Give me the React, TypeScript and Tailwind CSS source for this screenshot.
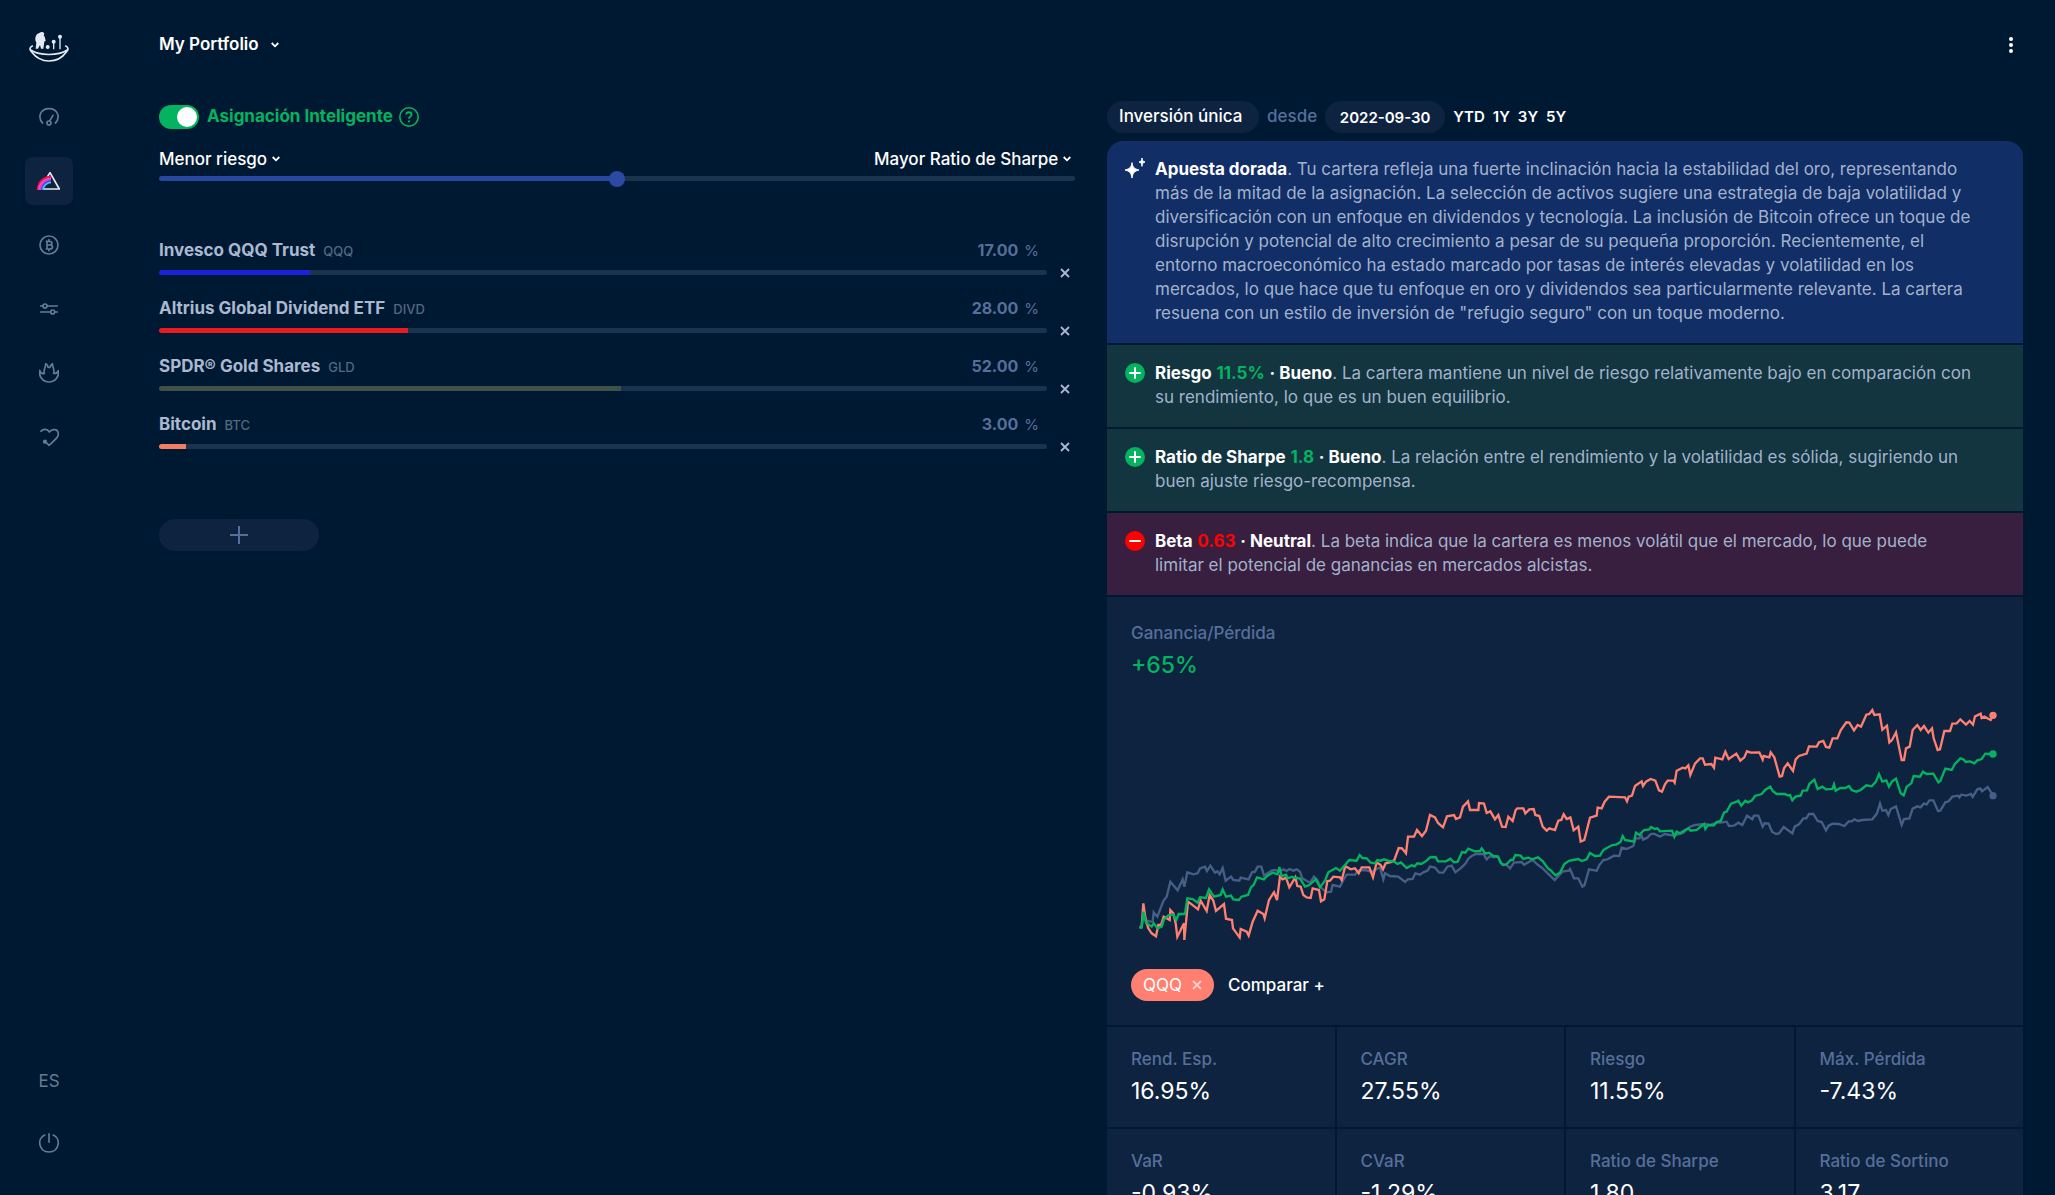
import { useState } from "react"
import type { CSSProperties, ReactNode } from "react"

interface Asset {
    name: string
    ticker: string
    weight: number
    color: string
}

interface Insight {
    kind: "good" | "bad"
    title: string
    value: string
    verdict: string
    text: string
}

const initialAssets: Asset[] = [
    { name: "Invesco QQQ Trust", ticker: "QQQ", weight: 17, color: "#1b22dc" },
    { name: "Altrius Global Dividend ETF", ticker: "DIVD", weight: 28, color: "#e81c1f" },
    { name: "SPDR® Gold Shares", ticker: "GLD", weight: 52, color: "#3f5248" },
    { name: "Bitcoin", ticker: "BTC", weight: 3, color: "#f27f62" },
]

const insights: Insight[] = [
    { kind: "good", title: "Riesgo", value: "11.5%", verdict: "Bueno", text: "La cartera mantiene un nivel de riesgo relativamente bajo en comparación con su rendimiento, lo que es un buen equilibrio." },
    { kind: "good", title: "Ratio de Sharpe", value: "1.8", verdict: "Bueno", text: "La relación entre el rendimiento y la volatilidad es sólida, sugiriendo un buen ajuste riesgo-recompensa." },
    { kind: "bad", title: "Beta", value: "0.63", verdict: "Neutral", text: "La beta indica que la cartera es menos volátil que el mercado, lo que puede limitar el potencial de ganancias en mercados alcistas." },
]

const stats = [
    ["Rend. Esp.", "16.95%"],
    ["CAGR", "27.55%"],
    ["Riesgo", "11.55%"],
    ["Máx. Pérdida", "-7.43%"],
    ["VaR", "-0.93%"],
    ["CVaR", "-1.29%"],
    ["Ratio de Sharpe", "1.80"],
    ["Ratio de Sortino", "3.17"],
]

// Each series is stored in two halves, the second one starts at x = 1380
const series = [
    {
        color: "#465f86",
        first: "88,443 95,440 100,400 110,422 122,425 128,425 131,397 142,410 160,363 170,350 181,305 203,331 218,298 223,320 232,277 250,283 263,280 270,265 285,260 291,273 301,257 315,278 322,274 329,283 338,264 347,302 363,290 370,300 388,302 392,293 416,298 426,277 435,275 443,260 454,260 462,287 475,278 485,272 495,270 508,275 520,268 530,273 538,267 550,272 560,268 570,275 577,295 600,308 612,290 622,300 632,322 650,337 663,335 668,315 690,320 700,300 710,284 735,284 745,272 765,270 785,275 810,262 820,298 825,280 840,288 865,290 885,306 893,298 908,297 916,280 930,284 940,277 953,272 960,260 975,263 988,278 1000,278 1012,260 1025,257 1036,277 1055,262 1067,250 1075,236 1085,228 1098,222 1120,222 1130,238 1140,228 1150,232 1164,230 1176,253 1190,255 1200,265 1212,248 1235,246 1242,254 1268,240 1284,255 1298,265 1334,300 1357,275 1376,272",
        second: "0,537 12,565 25,565 37,590 43,587 57,538 80,542 88,525 100,510 112,508 132,497 148,498 155,473 170,477 190,468 197,445 208,445 215,437 219,449 232,443 242,432 252,431 270,440 284,432 312,437 340,428 360,410 376,405 405,402 420,405 438,398 452,398 470,395 477,408 492,407 505,398 517,405 531,377 547,388 552,377 565,377 578,410 584,400 596,401 606,425 618,432 627,430 641,411 667,430 674,410 688,402 700,385 709,385 717,372 730,372 743,393 755,396 768,421 776,407 788,401 806,402 823,408 836,394 845,394 853,388 865,393 876,390 907,388 921,370 930,340 937,362 948,360 955,375 962,357 978,349 995,405 1002,387 1018,385 1028,356 1042,349 1052,352 1061,341 1070,343 1078,331 1090,331 1104,363 1111,362 1126,337 1136,334 1147,320 1165,317 1168,322 1174,314 1189,317 1203,312 1208,321 1222,298 1231,295 1236,304 1253,291 1269,317",
        end: 317,
    },
    {
        color: "#ff8070",
        first: "90,443 95,440 100,370 107,420 115,445 125,460 138,469 145,435 153,435 161,410 170,415 179,420 181,390 190,400 197,430 202,470 222,430 223,480 234,365 249,376 264,388 272,362 290,393 299,345 310,362 318,393 342,372 348,416 366,420 369,445 389,472 392,447 410,455 416,467 428,425 443,392 460,402 464,415 477,360 492,337 501,360 510,290 518,298 528,293 538,322 556,292 562,318 572,320 580,345 590,352 602,354 608,325 627,330 633,364 643,358 652,303 660,302 670,290 690,292 695,300 706,258 722,268 735,265 746,280 755,262 778,262 789,292 800,247 812,255 819,268 827,250 845,246 853,240 866,204 876,205 888,220 894,170 912,170 921,150 936,168 948,152 960,105 975,112 984,129 999,142 1011,109 1032,105 1038,117 1050,112 1059,80 1074,64 1080,90 1105,90 1107,69 1122,71 1130,99 1141,94 1155,118 1165,105 1176,140 1187,141 1195,110 1208,123 1217,90 1222,85 1240,85 1246,100 1258,88 1271,87 1276,105 1288,108 1298,140 1310,152 1318,145 1335,150 1345,122 1354,120 1361,103 1370,117",
        second: "1,382 11,421 25,410 32,455 43,450 60,383 80,377 83,353 95,355 104,335 117,320 165,322 171,334 176,320 186,317 195,288 215,274 219,288 228,275 242,267 256,272 267,301 276,305 285,283 293,272 310,272 314,278 320,242 338,233 346,235 355,226 361,255 375,221 390,205 398,205 405,224 424,222 432,233 436,203 457,208 466,185 476,207 499,191 511,212 523,202 531,184 542,188 568,187 578,209 581,198 598,202 602,187 613,202 629,260 636,258 642,235 653,220 669,243 677,208 687,198 710,191 717,169 740,170 747,157 760,153 768,171 778,173 788,145 802,145 812,121 829,97 838,98 852,121 863,105 873,110 889,74 898,72 907,60 913,75 929,73 937,119 951,107 958,157 966,150 978,127 995,210 1002,210 1008,175 1019,170 1028,120 1042,105 1052,120 1062,108 1075,128 1086,115 1091,145 1103,180 1110,178 1123,123 1140,123 1147,101 1160,100 1171,88 1188,104 1199,93 1209,104 1215,79 1232,71 1235,84 1243,80 1262,90 1269,76",
        end: 76,
    },
    {
        color: "#04b35f",
        first: "88,443 95,443 100,395 108,428 125,440 131,430 143,445 155,440 162,418 175,406 190,404 199,420 206,402 225,402 232,355 248,357 263,368 270,352 288,354 297,328 312,350 332,345 338,328 348,350 363,347 370,358 387,360 394,350 414,345 423,322 431,315 441,292 462,298 472,287 488,278 503,283 508,261 515,288 528,284 533,295 545,291 560,294 570,296 576,305 585,320 597,316 617,298 630,322 645,302 655,277 678,264 690,272 718,240 740,242 749,225 757,234 770,235 782,248 795,250 802,240 812,242 822,238 837,243 853,245 862,252 873,247 890,264 905,256 914,259 922,250 934,252 950,242 960,232 977,231 984,244 1008,244 1021,236 1032,247 1043,245 1056,216 1066,218 1075,206 1094,214 1110,213 1115,205 1126,221 1137,218 1150,228 1164,230 1172,248 1180,255 1190,252 1202,240 1209,240 1216,225 1232,227 1240,237 1255,233 1267,238 1284,232 1298,243 1314,265 1323,272 1336,286 1350,278 1363,252 1376,243",
        second: "0,512 25,507 35,513 50,508 60,489 75,498 90,497 100,480 125,466 140,463 152,455 158,438 165,450 192,455 198,428 208,435 222,420 238,418 243,411 255,417 262,415 270,424 306,422 313,440 320,425 330,430 345,420 355,415 362,422 380,420 402,402 406,417 414,405 432,406 440,396 452,393 462,368 470,365 483,341 500,335 505,332 514,347 526,332 534,337 545,332 555,318 575,312 585,300 601,290 608,303 620,312 645,312 652,316 660,315 667,331 676,320 692,317 698,302 711,301 718,282 733,269 743,297 757,290 768,298 787,297 792,283 797,302 811,294 826,294 837,288 845,300 859,305 872,300 889,286 905,289 918,275 927,252 937,275 949,271 957,290 966,275 978,266 992,310 1001,316 1010,290 1024,280 1031,258 1050,260 1059,245 1070,252 1090,251 1105,277 1111,273 1126,236 1145,240 1155,222 1171,205 1180,208 1187,216 1200,214 1213,220 1222,211 1235,207 1246,191 1256,192 1269,192",
        end: 192,
    },
]

function shift(points: string, dx: number, dy: number) {
    return points.split(" ").map(p => {
        const [x, y] = p.split(",").map(Number)
        return `${x + dx},${y + dy}`
    }).join(" ")
}

function fill(percent: number, color: string): CSSProperties {
    return { background: `linear-gradient(to right, ${color} ${percent}%, #1a344f ${percent}%)` }
}

function Chevron() {
    return <svg viewBox="0 0 8 6" className="pointer-events-none h-1.5 w-2 shrink-0" fill="none" stroke="currentColor" strokeWidth="1.8"><path d="M0.7 1L4 4.3L7.3 1" /></svg>
}

function Cross() {
    return <svg viewBox="0 0 10 10" className="h-2.5 w-2.5" fill="none" stroke="currentColor" strokeWidth="1.8"><path d="M1 1L9 9M9 1L1 9" /></svg>
}

function Logo() {
    return <svg viewBox="87 93 120 93" className="h-[31px] w-10" fill="none" stroke="#e3eaf3" strokeWidth="5" strokeLinecap="round">
        <path d="M97 138C88 142 88 149 95 156C108 173 127 183 147 183S187 173 199 156C206 149 206 142 197 138" />
        <path d="M92 150C120 168 174 168 202 150" />
        <path d="M161 127V146M180 112V146" strokeWidth="4" />
        <path d="M119 98C124 94 132 96 133 101L131 106C135 110 135 116 137 122L133 125L130 146H123L120 135L114 146H107L109 127C104 122 105 105 113 101Z" fill="#e3eaf3" stroke="none" />
        <g fill="#e3eaf3" stroke="none"><circle cx="143" cy="141" r="6" /><circle cx="161" cy="125" r="6" /><circle cx="180" cy="110" r="6" /></g>
    </svg>
}

function NavIcon({ box, children }: { box: string, children: ReactNode }) {
    return <svg viewBox={box} className="h-5 w-5" fill="none" stroke="currentColor" strokeWidth="5" strokeLinecap="round" strokeLinejoin="round">{children}</svg>
}

function NavItem({ label, active, children }: { label: string, active?: boolean, children: ReactNode }) {
    return <a href="#" aria-label={label} className={`flex h-12 w-12 items-center justify-center rounded-lg ${active ? "bg-[#0e2340]" : ""}`}>{children}</a>
}

function Sidebar() {
    return <aside className="flex w-[98px] shrink-0 flex-col items-center text-[#647d92]">
        <a href="#" aria-label="Inicio" className="mt-[31px]"><Logo /></a>
        <nav className="mt-[31px] flex flex-col gap-4">
            <NavItem label="Panel">
                <NavIcon box="117 321 60 60">
                    <path d="M129 371C111 352 121 326 147 326S183 352 165 371" strokeLinecap="butt" />
                    <circle cx="147" cy="369" r="6" />
                    <path d="M150 361L159 346" />
                </NavIcon>
            </NavItem>
            <NavItem label="Carteras" active>
                <svg viewBox="105 510 84 66" className="h-[22px] w-7" fill="none">
                    <path d="M142 531L150 518L178 567H131" stroke="#e3eaf3" strokeWidth="5" strokeLinejoin="round" />
                    <g strokeWidth="5">
                        <path d="M113 570C113 547 131 530 153 530" stroke="#ff1043" />
                        <path d="M117 570C117 550 134 535 153 535" stroke="#ff4fb0" />
                        <path d="M121 570C121 553 137 539 153 539" stroke="#ee35f5" />
                        <path d="M125 570C125 556 139 543 153 543" stroke="#4c3df0" />
                        <path d="M129 570C129 558 141 547 153 547" stroke="#31d2f5" />
                    </g>
                </svg>
            </NavItem>
            <NavItem label="Cripto">
                <NavIcon box="117 45 60 60">
                    <circle cx="147" cy="75" r="27" />
                    <path d="M139 64H149C158 64 158 75 149 75H141H150C160 75 160 87 150 87H139M141 64V87M147 59V63M147 88V92" strokeWidth="5" />
                </NavIcon>
            </NavItem>
            <NavItem label="Ajustes">
                <NavIcon box="117 237 60 60">
                    <path d="M122 258H128M141 258H172M122 276H152M165 276H172" />
                    <circle cx="135" cy="258" r="6" />
                    <circle cx="158" cy="276" r="6" />
                </NavIcon>
            </NavItem>
            <NavItem label="Tendencias">
                <NavIcon box="117 429 60 60">
                    <path d="M119 451C116 470 128 486 147 486S178 470 175 452C172 458 168 462 161 460C165 450 157 440 157 431C152 434 151 438 150 442H144C144 436 142 433 137 431C138 440 129 450 133 460C126 462 121 458 119 451Z" />
                </NavIcon>
            </NavItem>
            <NavItem label="Favoritos">
                <NavIcon box="117 622 60 60">
                    <path d="M123 635C129 627 142 627 148 637C155 627 174 626 175 642C176 651 168 658 147 677L137 667" />
                    <circle cx="135" cy="666" r="4" fill="currentColor" />
                </NavIcon>
            </NavItem>
        </nav>
        <div className="mt-auto mb-7 flex flex-col items-center gap-[26px]">
            <button className="leading-6">ES</button>
            <button aria-label="Salir" className="flex h-12 w-12 items-center justify-center">
                <NavIcon box="117 249 60 60"><path d="M136 254C109 264 116 306 147 306S185 264 158 254M147 250V278" strokeLinecap="butt" /></NavIcon>
            </button>
        </div>
    </aside>
}

function RiskSelect({ label, value }: { label: string, value: string }) {
    return <div className="flex items-center gap-1 text-white">
        <select aria-label={label} className="appearance-none bg-transparent font-medium leading-6">
            <option>{value}</option>
        </select>
        <Chevron />
    </div>
}

function AssetRow({ asset, onChange, onRemove }: { asset: Asset, onChange: (weight: number) => void, onRemove: () => void }) {
    return <li className="flex items-end">
        <div className="min-w-0 flex-1">
            <div className="flex h-6 items-baseline pr-2">
                <span className="font-bold leading-6 text-[#aab9d0]">{asset.name}</span>
                <span className="ml-2 text-[13px] font-medium text-[#52697f]">{asset.ticker}</span>
                <input aria-label={`Peso de ${asset.name}`} readOnly value={asset.weight.toFixed(2)} className="ml-auto w-16 bg-transparent text-right text-base font-bold leading-6 text-[#566f9a]" />
                <span className="ml-1.5 text-[15px] text-[#566f9a]">%</span>
            </div>
            <input
                type="range"
                min={0}
                max={100}
                value={asset.weight}
                onChange={e => onChange(Number(e.target.value))}
                aria-label={asset.ticker}
                style={fill(asset.weight, asset.color)}
                className="mt-2 block h-[5px] w-full appearance-none rounded-full [&::-webkit-slider-thumb]:h-4 [&::-webkit-slider-thumb]:w-0 [&::-webkit-slider-thumb]:appearance-none"
            />
        </div>
        <button aria-label={`Quitar ${asset.name}`} onClick={onRemove} className="-mb-2 ml-2 flex h-5 w-5 items-center justify-center text-[#aab9d0]"><Cross /></button>
    </li>
}

function Allocation() {
    const [smart, setSmart] = useState(true)
    const [risk, setRisk] = useState(50)
    const [assets, setAssets] = useState(initialAssets)

    return <section className="min-w-0 flex-1 pt-1">
        <div className="flex h-6 items-center">
            <label className="flex items-center gap-2 font-bold text-[#04b35f]">
                <input type="checkbox" checked={smart} onChange={e => setSmart(e.target.checked)} className="peer sr-only" />
                <span className="flex h-6 w-10 items-center rounded-full bg-[#1a344f] p-0.5 peer-checked:justify-end peer-checked:bg-[#04b35f]">
                    <span className="h-5 w-5 rounded-full bg-white" />
                </span>
                Asignación Inteligente
            </label>
            <button aria-label="Ayuda" className="ml-1.5 text-[#04b35f]">
                <svg viewBox="0 0 20 20" className="h-5 w-5" fill="none" stroke="currentColor" strokeWidth="1.6">
                    <circle cx="10" cy="10" r="9.2" />
                    <path d="M7.3 7.6C7.3 4.4 12.6 4.4 12.6 7.6C12.6 9.5 10 9.4 10 11.8M10 13.4V15.2" strokeWidth="1.9" />
                </svg>
            </button>
        </div>
        <div className="mt-[18px] flex justify-between pr-1">
            <RiskSelect label="Objetivo mínimo" value="Menor riesgo" />
            <RiskSelect label="Objetivo máximo" value="Mayor Ratio de Sharpe" />
        </div>
        <input
            type="range"
            value={risk}
            onChange={e => setRisk(Number(e.target.value))}
            aria-label="Nivel de riesgo"
            style={fill(risk, "#2a479f")}
            className="mt-[5px] block h-[5px] w-full appearance-none rounded-full [&::-webkit-slider-thumb]:h-4 [&::-webkit-slider-thumb]:w-4 [&::-webkit-slider-thumb]:appearance-none [&::-webkit-slider-thumb]:rounded-full [&::-webkit-slider-thumb]:bg-[#2c4aa3]"
        />
        <ul className="mt-[57px] flex flex-col gap-[21px]">
            {assets.map((a, i) => <AssetRow
                key={a.ticker}
                asset={a}
                onChange={weight => setAssets(assets.map((b, j) => i === j ? { ...b, weight } : b))}
                onRemove={() => setAssets(assets.filter(b => b !== a))}
            />)}
        </ul>
        <button aria-label="Añadir activo" className="mt-[70px] flex h-8 w-40 items-center justify-center rounded-full bg-[#0e2340] text-[#566f9a]">
            <svg viewBox="0 0 18 18" className="h-[18px] w-[18px]" stroke="currentColor" strokeWidth="2"><path d="M9 0V18M0 9H18" /></svg>
        </button>
    </section>
}

function InsightIcon({ kind }: { kind: "good" | "bad" }) {
    return <svg viewBox="0 0 20 20" className="mt-0.5 h-5 w-5 shrink-0" stroke="white" strokeWidth="2" strokeLinecap="round">
        <circle cx="10" cy="10" r="10" fill={kind === "good" ? "#04b35f" : "#ff0000"} stroke="none" />
        <path d={kind === "good" ? "M10 5V15M5 10H15" : "M5 10H15"} />
    </svg>
}

function Chart() {
    return <svg viewBox="63 -3 2604 816" className="mt-2 block w-full" fill="none" role="img" aria-label="Ganancia/Pérdida">
        {series.map(s => <g key={s.color}>
            <polyline points={shift(s.first, 0, 270) + " " + shift(s.second, 1380, 0)} stroke={s.color} strokeWidth="7" />
            <circle cx={2649} cy={s.end} r="11" fill={s.color} />
        </g>)}
    </svg>
}

function Analysis() {
    const [compared, setCompared] = useState(true)

    return <section className="min-w-0 flex-1">
        <div className="flex h-8 items-center font-medium">
            <select aria-label="Tipo de inversión" className="h-8 appearance-none rounded-full bg-[#0e2340] pr-4 pl-3 text-white">
                <option>Inversión única</option>
            </select>
            <span className="mx-2 text-[#566f9a]">desde</span>
            <input aria-label="Fecha de inicio" defaultValue="2022-09-30" className="h-8 w-[120px] rounded-full bg-[#0e2340] text-center text-[15px] font-semibold text-white" />
            <div className="ml-2 flex gap-2 text-[15px] font-semibold text-white">
                {["YTD", "1Y", "3Y", "5Y"].map(p => <button key={p}>{p}</button>)}
            </div>
        </div>
        <div className="mt-2 flex flex-col gap-0.5 overflow-hidden rounded-t-2xl leading-6 text-[#a3b2cb]">
            <div className="flex gap-2.5 bg-[#112e67] pt-4 pr-[50px] pb-[18px] pl-[18px]">
                <svg viewBox="75 207 60 60" className="mt-px h-5 w-5 shrink-0" fill="white">
                    <path d="M96 221C99 236 102 239 117 243C102 247 99 251 96 267C93 251 90 247 75 243C90 239 93 236 96 221Z" stroke="white" strokeWidth="3" />
                    <path d="M126 207C127 215 129 218 135 219C129 220 127 223 126 232C125 223 123 220 117 219C123 218 125 215 126 207Z" stroke="white" strokeWidth="3" />
                </svg>
                <p><strong className="font-bold text-white">Apuesta dorada</strong>. Tu cartera refleja una fuerte inclinación hacia la estabilidad del oro, representando más de la mitad de la asignación. La selección de activos sugiere una estrategia de baja volatilidad y diversificación con un enfoque en dividendos y tecnología. La inclusión de Bitcoin ofrece un toque de disrupción y potencial de alto crecimiento a pesar de su pequeña proporción. Recientemente, el entorno macroeconómico ha estado marcado por tasas de interés elevadas y volatilidad en los mercados, lo que hace que tu enfoque en oro y dividendos sea particularmente relevante. La cartera resuena con un estilo de inversión de "refugio seguro" con un toque moderno.</p>
            </div>
            {insights.map(i => <div key={i.title} className={`flex gap-2.5 pt-4 pr-[50px] pb-[18px] pl-[18px] ${i.kind === "good" ? "bg-[#123540]" : "bg-[#381f3f]"}`}>
                <InsightIcon kind={i.kind} />
                <p>
                    <strong className="font-bold text-white">{i.title}</strong>{" "}
                    <strong className={i.kind === "good" ? "font-bold text-[#04b35f]" : "font-bold text-[#ff0000]"}>{i.value}</strong>{" "}
                    <strong className="font-bold text-white">· {i.verdict}</strong>. {i.text}
                </p>
            </div>)}
            <div className="bg-[#0e2340] p-6">
                <h2 className="font-medium text-[#566f9a]">Ganancia/Pérdida</h2>
                <p className="mt-1 text-[23px] font-medium leading-8 text-[#04b35f]">+65%</p>
                <Chart />
                <div className="mt-2 flex h-8 items-center gap-3.5">
                    {compared && <span className="flex h-8 items-center gap-2.5 rounded-full bg-[#ff8070] px-3 text-white">
                        QQQ
                        <button aria-label="Quitar QQQ" onClick={() => setCompared(false)} className="text-[#ffd0ca]"><Cross /></button>
                    </span>}
                    <button className="font-medium text-white">Comparar +</button>
                </div>
            </div>
            <dl className="grid grid-cols-4 gap-0.5">
                {stats.map(([label, value]) => <div key={label} className="bg-[#0e2340] px-6 py-5">
                    <dt className="font-medium text-[#566f9a]">{label}</dt>
                    <dd className="mt-1 text-[23px] leading-8 text-white">{value}</dd>
                </div>)}
            </dl>
        </div>
    </section>
}

export default function App() {
    return <div className="flex h-screen overflow-hidden bg-[#001933] font-[Inter,'Noto_Sans',sans-serif] text-[17px]">
        <Sidebar />
        <main className="min-w-0 flex-1 pr-8 pl-[61px]">
            <header className="mt-[29px] flex h-8 items-center justify-between text-white">
                <button className="flex items-center gap-3 font-semibold">My Portfolio <Chevron /></button>
                <button aria-label="Más opciones" className="flex h-6 w-6 items-center justify-center">
                    <svg viewBox="0 0 4 16" className="h-4 w-1" fill="currentColor"><circle cx="2" cy="2" r="2" /><circle cx="2" cy="8" r="2" /><circle cx="2" cy="14" r="2" /></svg>
                </button>
            </header>
            <div className="mt-10 flex gap-8">
                <Allocation />
                <Analysis />
            </div>
        </main>
    </div>
}
